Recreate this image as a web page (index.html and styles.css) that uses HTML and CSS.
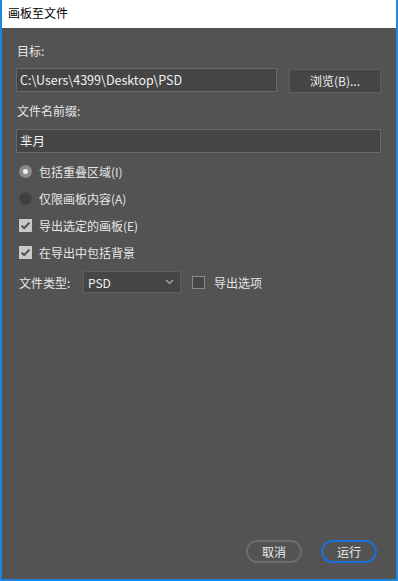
FILE: index.html
```html
<!DOCTYPE html>
<html lang="zh-CN">
<head>
  <meta charset="UTF-8">
  <title>画板至文件</title>
  <link rel="stylesheet" href="styles.css">
</head>
<body>
  <div class="window">
    <!-- Title bar -->
    <div class="titlebar">画板至文件</div>

    <div class="content">
      <div class="label">目标:</div>
      <div class="row">
        <div class="field path">C:\Users\4399\Desktop\PSD</div>
        <div class="browse">浏览(B)...</div>
      </div>

      <div class="label label-prefix">文件名前缀:</div>
      <div class="field prefix">芈月</div>

      <div class="option first">
        <span class="radio on"></span>包括重叠区域(I)
      </div>
      <div class="option">
        <span class="radio"></span>仅限画板内容(A)
      </div>
      <div class="option">
        <span class="check on">
          <svg width="13" height="13" viewBox="0 0 13 13"><path d="M2.6 6.6 L5.2 9.2 L10.4 3.6" fill="none" stroke="#4a4a4a" stroke-width="1.8"/></svg>
        </span>导出选定的画板(E)
      </div>
      <div class="option">
        <span class="check on">
          <svg width="13" height="13" viewBox="0 0 13 13"><path d="M2.6 6.6 L5.2 9.2 L10.4 3.6" fill="none" stroke="#4a4a4a" stroke-width="1.8"/></svg>
        </span>在导出中包括背景
      </div>

      <div class="type-row">
        <span class="type-label">文件类型:</span>
        <div class="select">
          <span>PSD</span>
          <svg width="9" height="6" viewBox="0 0 9 6"><path d="M1 1 L4.5 4.5 L8 1" fill="none" stroke="#b0b0b0" stroke-width="1.2"/></svg>
        </div>
        <span class="check off"></span>
        <span class="type-opt">导出选项</span>
      </div>
    </div>

    <!-- Footer buttons -->
    <div class="footer">
      <div class="btn cancel">取消</div>
      <div class="btn run">运行</div>
    </div>
  </div>
</body>
</html>
```

FILE: styles.css
```css
body {
  margin: 0;
  font-family: "Noto Sans CJK SC", "Noto Sans", sans-serif;
  font-size: 12px;
}

.window {
  width: 394px;
  height: 579px;
  border: 2px solid #1d87e4;
  border-top: 0;
  background-color: #535353;
  display: flex;
  flex-direction: column;
}

.titlebar {
  height: 28px;
  line-height: 26px;
  background-color: #fff;
  color: #000;
  padding-left: 6px;
}

.content {
  padding: 0 15px 0 14px;
  color: #e6e6e6;
}

.label {
  height: 17px;
  line-height: 17px;
  margin-top: 14px;
  margin-left: 1px;
}

.label-prefix {
  margin-top: 9px;
}

.row {
  display: flex;
  gap: 12px;
  margin-top: 9px;
}

.field {
  height: 22px;
  line-height: 22px;
  background-color: #454545;
  border: 1px solid #696969;
  color: #f0f0f0;
  padding-left: 3px;
  font-size: 12.5px;
}

.path {
  flex: 1;
}

.prefix {
  margin-top: 10px;
}

.browse {
  width: 90px;
  height: 22px;
  line-height: 22px;
  margin-top: 1px;
  background-color: #454545;
  border: 1px solid #5e5e5e;
  text-align: center;
  color: #f0f0f0;
}

.option {
  display: flex;
  align-items: center;
  height: 27px;
  margin-left: 3px;
}

.option.first {
  margin-top: 5px;
}

.radio {
  width: 13px;
  height: 13px;
  border-radius: 50%;
  background-color: #3f3f3f;
  box-shadow: inset 0 0 0 1px #4c4c4c;
  margin-right: 7px;
  position: relative;
}

.radio.on {
  background-color: #8a8a8a;
  box-shadow: none;
}

.radio.on::after {
  content: "";
  position: absolute;
  left: 4px;
  top: 4px;
  width: 5px;
  height: 5px;
  border-radius: 50%;
  background-color: #efefef;
}

.check {
  width: 13px;
  height: 13px;
  margin-right: 7px;
  display: inline-block;
}

.check.on {
  background-color: #c9c9c9;
}

.check svg {
  display: block;
}

.check.off {
  box-sizing: border-box;
  border: 1px solid #8a8a8a;
  background-color: #474747;
  margin: 0 9px 0 11px;
}

.type-row {
  display: flex;
  align-items: center;
  margin-top: 5px;
  height: 22px;
  margin-left: 3px;
}

.type-label {
  width: 64px;
}

.select {
  box-sizing: border-box;
  width: 98px;
  height: 22px;
  background-color: #454545;
  border: 1px solid #5e5e5e;
  display: flex;
  align-items: center;
  justify-content: space-between;
  padding: 0 6px 0 4px;
  color: #f0f0f0;
  font-size: 12px;
}

.footer {
  margin-top: auto;
  display: flex;
  justify-content: flex-end;
  gap: 19px;
  padding: 0 19px 16px 0;
}

.btn {
  box-sizing: border-box;
  width: 56px;
  height: 23px;
  line-height: 19px;
  border-radius: 12px;
  text-align: center;
  color: #ececec;
}

.cancel {
  border: 2px solid #6c6c6c;
}

.run {
  border: 2px solid #1a6fd8;
}
```
